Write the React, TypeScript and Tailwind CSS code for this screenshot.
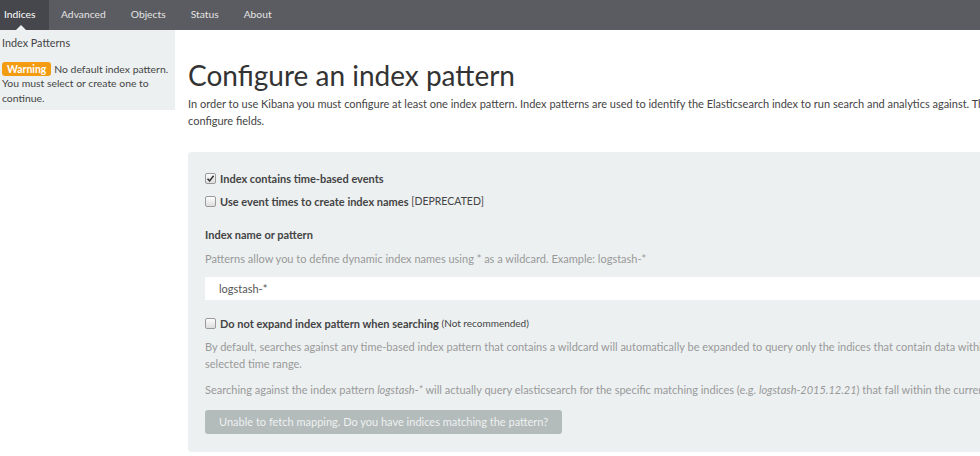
import React from "react";

function Box({ checked }: { checked?: boolean }) {
  return (
    <span className="mr-[4px] inline-flex h-[11px] w-[11px] shrink-0 items-center justify-center rounded-[2px] border border-[#9a9a9a] bg-gradient-to-b from-[#fcfcfc] to-[#dedede]">
      {checked && (
        <svg width="9" height="9" viewBox="0 0 9 9">
          <path d="M1.5 4.8 L3.6 6.9 L7.6 1.8" fill="none" stroke="#333" strokeWidth="1.6" />
        </svg>
      )}
    </span>
  );
}

export default function App() {
  const tabs = ["Indices", "Advanced", "Objects", "Status", "About"];
  return (
    <div className="w-[980px] h-[456px] overflow-hidden bg-white text-[#444]" style={{ fontFamily: "Lato, 'Open Sans', sans-serif" }}>
      <div className="flex h-[30px] bg-[#5b5c61] text-[10.3px] text-[#e4e4e4]">
        {tabs.map((t, i) => (
          <div
            key={t}
            className={
              i === 0
                ? "relative flex items-center bg-[#46474c] pl-[4px] pr-[13px] text-white"
                : "flex items-center px-[12.5px]"
            }
          >
            {t}
            {i === 0 && (
              <span className="absolute bottom-0 left-[16px] h-0 w-0 border-x-[5px] border-b-[5px] border-x-transparent border-b-[#ecf0f1]" />
            )}
          </div>
        ))}
      </div>
      <div className="flex">
        <div className="w-[175px] shrink-0 self-start whitespace-nowrap bg-[#ecf0f1] pl-[2px] pt-[6px] pb-[5px] text-[10.8px] leading-[14.5px] text-[#444]">
          <div className="mb-[11px]">Index Patterns</div>
          <div className="text-[10.4px]">
            <span className="mr-[3px] inline-block rounded-[3px] bg-[#f39c12] px-[5px] leading-[14px] font-bold text-white">Warning</span>
            No default index pattern.
            <br />
            You must select or create one to
            <br />
            continue.
          </div>
        </div>
        <div className="ml-[13px] flex-1 min-w-0">
          <h1 className="mt-[28px] whitespace-nowrap text-[28px] leading-[34px] font-normal text-[#333]">Configure an index pattern</h1>
          <p className="mt-[2.5px] whitespace-nowrap text-[11px] leading-[17px] text-[#444]">
            In order to use Kibana you must configure at least one index pattern. Index patterns are used to identify the Elasticsearch index to run search and analytics against. They are also used to
            <br />
            configure fields.
          </p>
          <div className="mt-[23.5px] w-[830px] rounded-[4px] bg-[#ecf0f1] pl-[17px] pt-[19px] pb-[18px] text-[11px] leading-[15px]">
            <div className="flex items-center font-bold text-[#444]">
              <Box checked />
              Index contains time-based events
            </div>
            <div className="mt-[8px] flex items-center font-bold text-[#444]">
              <Box />
              Use event times to create index names&nbsp;<span className="text-[10.5px] font-normal">[DEPRECATED]</span>
            </div>
            <div className="mt-[18px] font-bold text-[#444]">Index name or pattern</div>
            <div className="mt-[9px] text-[#999]">Patterns allow you to define dynamic index names using * as a wildcard. Example: logstash-*</div>
            <div className="mt-[10.5px] flex h-[23px] items-center bg-white pl-[14px] text-[#555]">logstash-*</div>
            <div className="mt-[16.5px] flex items-center font-bold text-[#444]">
              <Box />
              Do not expand index pattern when searching&nbsp;<span className="text-[10px] font-normal">(Not recommended)</span>
            </div>
            <p className="mt-[7px] whitespace-nowrap leading-[17px] text-[#999]">
              By default, searches against any time-based index pattern that contains a wildcard will automatically be expanded to query only the indices that contain data within the currently
              <br />
              selected time range.
            </p>
            <p className="mt-[9px] whitespace-nowrap leading-[17px] text-[#999]">
              Searching against the index pattern <i>logstash-*</i> will actually query elasticsearch for the specific matching indices (e.g. <i>logstash-2015.12.21</i>) that fall within the current time range.
            </p>
            <button className="mt-[11.5px] h-[24px] rounded-[3px] bg-[#b3bbbb] px-[14px] text-[11px] text-[#eef1f1]">
              Unable to fetch mapping. Do you have indices matching the pattern?
            </button>
          </div>
        </div>
      </div>
    </div>
  );
}
